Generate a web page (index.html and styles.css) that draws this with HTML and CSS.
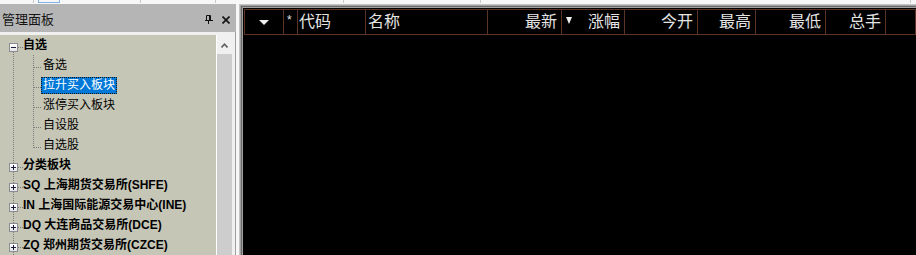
FILE: index.html
```html
<!DOCTYPE html>
<html lang="zh-CN">
<head>
<meta charset="utf-8">
<title>管理面板</title>
<link rel="stylesheet" href="styles.css">
</head>
<body>
<div class="top">
  <span class="mark m1"></span>
  <span class="tabbox"></span>
  <span class="mark m2"></span>
  <span class="mark m3"></span>
  <span class="mark m4"></span>
  <span class="mark m5"></span>
  <span class="mark m6"></span>
</div>
<div class="main">
  <div class="panel">
    <div class="titlebar">
      <span class="title">管理面板</span>
      <span class="tools">
        <svg class="pin" width="8" height="9" viewBox="0 0 8 9">
          <path d="M1.5 0.5H5.5V5.5M1.5 0.5V5.5" fill="none" stroke="#111" stroke-width="1"/>
          <rect x="4" y="0" width="1" height="6" fill="#111"/>
          <rect x="0" y="5" width="8" height="1" fill="#111"/>
          <rect x="3" y="6" width="1" height="3" fill="#111"/>
        </svg>
        <svg class="close" width="8" height="8" viewBox="0 0 8 8">
          <path d="M0.5 0.5L7.5 7.5M7.5 0.5L0.5 7.5" stroke="#111" stroke-width="1.6" fill="none"/>
        </svg>
      </span>
    </div>
    <div class="pbody">
      <div class="tree">
        <div class="row root"><span class="box minus"></span><span class="label">自选</span></div>
        <div class="children">
          <div class="row child"><span class="label">备选</span></div>
          <div class="row child"><span class="label sel">拉升买入板块</span></div>
          <div class="row child"><span class="label">涨停买入板块</span></div>
          <div class="row child"><span class="label">自设股</span></div>
          <div class="row child"><span class="label">自选股</span></div>
        </div>
        <div class="row root"><span class="box plus"></span><span class="label">分类板块</span></div>
        <div class="row root"><span class="box plus"></span><span class="label">SQ 上海期货交易所(SHFE)</span></div>
        <div class="row root"><span class="box plus"></span><span class="label">IN 上海国际能源交易中心(INE)</span></div>
        <div class="row root"><span class="box plus"></span><span class="label">DQ 大连商品交易所(DCE)</span></div>
        <div class="row root"><span class="box plus"></span><span class="label">ZQ 郑州期货交易所(CZCE)</span></div>
      </div>
      <div class="vline"></div>
      <div class="scroll">
        <div class="sbtn">
          <svg width="7" height="5" viewBox="0 0 7 5"><path d="M0.5 4.5L3.5 1.2L6.5 4.5" fill="none" stroke="#606060" stroke-width="1.6"/></svg>
        </div>
        <div class="strack"></div>
      </div>
    </div>
  </div>
  <div class="right">
    <div class="frame">
      <div class="header">
        <div class="c w1 center"><span class="tri-wide"></span></div>
        <div class="c w2 star"><span class="ast">*</span></div>
        <div class="c w3 left1">代码</div>
        <div class="c w4 left2">名称</div>
        <div class="c w5 r">最新</div>
        <div class="c w6 r"><span class="tri-small"></span><span class="push">涨幅</span></div>
        <div class="c w7 r">今开</div>
        <div class="c w8 r">最高</div>
        <div class="c w9 r">最低</div>
        <div class="c w10 r">总手</div>
        <div class="c w11"></div>
      </div>
    </div>
  </div>
</div>
</body>
</html>
```
FILE: styles.css
```css
html, body {
  margin: 0;
  padding: 0;
}
body {
  width: 916px;
  height: 255px;
  overflow: hidden;
  background: #f0f0f0;
  font-family: "Liberation Sans", "Noto Sans CJK SC", sans-serif;
}

/* top strip */
.top {
  height: 4px;
  display: flex;
  background: #f7f7f7;
}
.mark {
  width: 1px;
  height: 3px;
  background: #c8c8c8;
  flex: none;
}
.m1 { margin-left: 33px; }
.tabbox {
  flex: none;
  width: 22px;
  height: 3px;
  box-sizing: border-box;
  border: 1px solid #7eb4ea;
  border-top: 0;
  margin-left: 4px;
}
.m2 { margin-left: 80px; }
.m3 { margin-left: 74px; }
.m4 { margin-left: 127px; }
.m5 { margin-left: 136px; }
.m6 { margin-left: 429px; }

.main {
  display: flex;
  height: 251px;
}

/* left panel */
.panel {
  width: 236px;
  flex: none;
  display: flex;
  flex-direction: column;
}
.titlebar {
  height: 28px;
  flex: none;
  background: #b5b5b5;
  display: flex;
  align-items: center;
  justify-content: space-between;
  padding: 0 6px 0 2px;
}
.title {
  font-family: "Noto Sans CJK SC", sans-serif;
  font-size: 13px;
  line-height: 16px;
  color: #141414;
  margin-top: 2px;
}
.tools {
  display: flex;
  align-items: center;
  gap: 9px;
  margin-top: 3px;
}
.tools svg { display: block; }

.pbody {
  flex: 1;
  min-height: 0;
  display: flex;
  padding-top: 3px;
  padding-right: 3px;
  background: #f0f0f0;
  border-right: 1px solid #a0a0a0;
}
.tree {
  width: 216px;
  flex: none;
  overflow: hidden;
  background:
    repeating-linear-gradient(to bottom, #7c7c7c 0 1px, transparent 1px 2px) 13px 17px / 1px 100% no-repeat,
    #c6c6b6;
}
.vline {
  width: 1px;
  flex: none;
  background: #ffffff;
}
.scroll {
  width: 15px;
  flex: none;
  display: flex;
  flex-direction: column;
}
.sbtn {
  height: 19px;
  flex: none;
  display: flex;
  align-items: center;
  justify-content: center;
  padding-top: 2px;
  box-sizing: border-box;
}
.sbtn svg { display: block; }
.strack {
  flex: 1;
  background: #cdcdcd;
}

/* tree rows */
.row {
  height: 20px;
  display: flex;
  align-items: flex-start;
}
.root {
  padding-left: 9px;
  background: repeating-linear-gradient(to right, #7c7c7c 0 1px, transparent 1px 2px) 18px 12px / 5px 1px no-repeat;
}
.children {
  background: repeating-linear-gradient(to bottom, #7c7c7c 0 1px, transparent 1px 2px) 33px 0 / 1px 93px no-repeat;
}
.child {
  padding-left: 41px;
  background: repeating-linear-gradient(to right, #7c7c7c 0 1px, transparent 1px 2px) 34px 12px / 7px 1px no-repeat;
}
.box {
  flex: none;
  width: 9px;
  height: 9px;
  margin-top: 8px;
  box-sizing: border-box;
  border: 1px solid #8c8c94;
}
.minus {
  background:
    linear-gradient(#1c1c3c, #1c1c3c) center / 5px 1px no-repeat,
    linear-gradient(#ffffff, #e4e4e4);
}
.plus {
  background:
    linear-gradient(#1c1c3c, #1c1c3c) center / 5px 1px no-repeat,
    linear-gradient(#1c1c3c, #1c1c3c) center / 1px 5px no-repeat,
    linear-gradient(#ffffff, #e4e4e4);
}
.label {
  margin-top: 2px;
  height: 17px;
  box-sizing: border-box;
  line-height: 15px;
  border: 1px solid transparent;
  padding: 0 1px;
  white-space: nowrap;
  font-size: 12px;
  color: #000;
}
.root .label {
  font-weight: bold;
  margin-left: 3px;
}
.sel {
  background: #0078d7;
  color: #ffffff;
  border: 1px dotted #1a1a1a;
}

/* right grid */
.right {
  flex: 1;
  padding-left: 3px;
  background: #f7f7f7;
}
.frame {
  height: 100%;
  box-sizing: border-box;
  background: #000;
  padding: 5px 0 0 5px;
  box-shadow:
    inset 1px 1px 0 #c4c4c4,
    inset 2px 2px 0 #a0a0a0,
    inset 3px 3px 0 #6a6a6a,
    inset 4px 4px 0 #a0a0a0;
}
.header {
  display: flex;
  height: 26px;
  box-sizing: border-box;
  border: 1px solid #5c3424;
  border-right: 0;
  color: #e4e4e4;
  font-family: "Noto Sans CJK SC", sans-serif;
  font-size: 16px;
  line-height: 20px;
  overflow: hidden;
}
.c {
  flex: none;
  box-sizing: border-box;
  height: 24px;
  border-right: 1px solid #5c3424;
  display: flex;
  align-items: flex-start;
  white-space: nowrap;
}
.w1 { width: 39px; }
.w2 { width: 14px; }
.w3 { width: 68px; }
.w4 { width: 122px; }
.w5 { width: 74px; }
.w6 { width: 63px; }
.w7 { width: 73px; }
.w8 { width: 58px; }
.w9 { width: 70px; }
.w10 { width: 60px; }
.w11 { flex: 1; }
.center { justify-content: center; }
.r { justify-content: flex-end; padding-right: 4px; }
.left1 { padding-left: 1px; }
.left2 { padding-left: 2px; }
.star { padding-left: 3px; }
.ast {
  font-family: "Liberation Sans", sans-serif;
  font-size: 12px;
  line-height: 20px;
}
.tri-wide {
  width: 0;
  height: 0;
  margin-top: 10px;
  border-left: 5px solid transparent;
  border-right: 5px solid transparent;
  border-top: 5px solid #f0f0f0;
}
.tri-small {
  width: 0;
  height: 0;
  margin-top: 7px;
  margin-left: 4px;
  border-left: 3px solid transparent;
  border-right: 3px solid transparent;
  border-top: 7px solid #f0f0f0;
}
.push { margin-left: auto; }
```
